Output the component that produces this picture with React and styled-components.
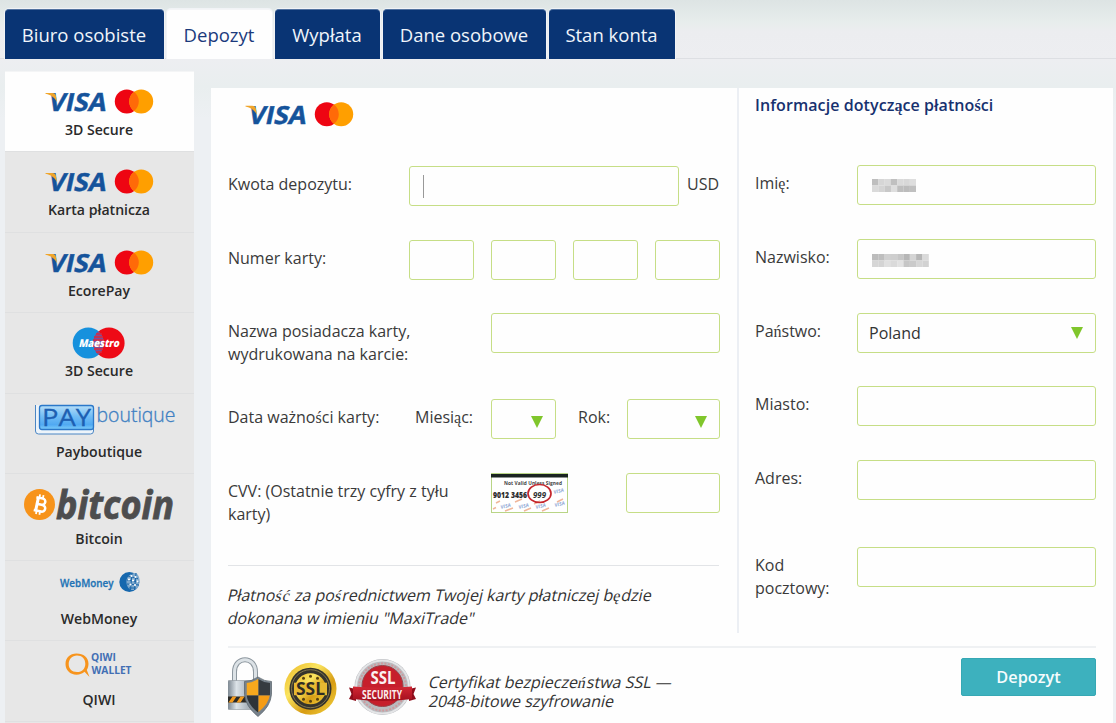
import React from 'react';
import styled, { createGlobalStyle } from 'styled-components';

const Global = createGlobalStyle`
  * { box-sizing: border-box; }
  html, body { margin: 0; padding: 0; overflow: hidden; }
  body {
    width: 1116px; height: 723px;
    font-family: "Open Sans", "Liberation Sans", sans-serif;
    font-size: 16px; color: #333;
    background: #eceff2;
  }
`;

const Page = styled.div`
  width: 1116px; height: 723px; overflow: hidden;
  display: flex; flex-direction: column;
`;

const TabBar = styled.nav`
  display: flex; height: 59px; flex: none;
  padding: 9px 0 0 5px; gap: 3px;
  border-bottom: 1px solid #dddfe3;
  background: linear-gradient(#dde4e4 0, #e7edec 22px, #ecedf0 32px, #edeef1 100%);
`;

const Tab = styled.button`
  width: ${(p) => p.$w}px; height: 50px; flex: none;
  margin: 0; padding: 1px 1px 0 0; border: 0;
  border-radius: 4px 4px 0 0;
  border-top: 1px solid ${(p) => (p.$active ? '#f4f5f7' : '#5273a0')};
  background: ${(p) => (p.$active ? '#fefefe' : '#093474')};
  color: ${(p) => (p.$active ? '#1b3a7c' : '#f0f5fb')};
  font: 18.5px/48px "Open Sans", sans-serif;
  text-align: center; white-space: nowrap;
  box-shadow: 0 0 0 1px #f1f3f6;
`;

const Body = styled.div`
  display: flex; flex: 1; gap: 17px; align-items: flex-start;
  padding-left: 5px;
  background: linear-gradient(#edeef1 0, #e9eeef 28px, #edf0f3 60px);
`;

const Sidebar = styled.aside`
  width: 189px; flex: none; padding-top: 12px;
  display: flex; flex-direction: column;
`;

const Method = styled.div`
  height: ${(p) => p.$h}px; flex: none;
  display: flex; flex-direction: column; align-items: center;
  background: ${(p) => (p.$active ? '#fefefe' : '#e7e7e7')};
  border-top: 1px solid ${(p) => (p.$active ? '#f4f5f6' : '#dfe0e1')};
`;

const MethodLogo = styled.svg`
  display: block; flex: none; width: 189px; height: ${(p) => p.$h}px;
  margin-top: -1px;
`;

const MethodName = styled.span`
  font-size: 14.1px; line-height: 20px; font-weight: 600; color: #2a2a2a;
  padding-right: 1px;
`;

const Panel = styled.main`
  width: 902px; height: 635px; margin-top: 29px; flex: none;
  background: #fefefe;
  display: flex; flex-direction: column;
`;

const Columns = styled.div`
  display: flex; height: 545px; flex: none;
`;

const CardColumn = styled.section`
  width: 528px; padding-left: 17px; flex: none;
  border-right: 2px solid #eceff4;
`;

const InfoColumn = styled.section`
  flex: 1; padding-left: 16px;
`;

const PanelLogo = styled.svg`
  display: block; width: 140px; height: 78px;
`;

const InfoTitle = styled.h2`
  margin: 0; height: 77px; padding-top: 6px;
  font-size: 16px; line-height: 23px; font-weight: 600; color: #17316f;
  letter-spacing: 0.08px;
  white-space: nowrap;
`;

const Row = styled.div`
  display: flex; align-items: flex-start; height: ${(p) => p.$h}px;
`;

const Label = styled.label`
  width: ${(p) => p.$w}px; flex: none; padding-top: 7px;
  line-height: 23px; white-space: pre-line; color: #3a3a3a;
`;

const Field = styled.div`
  width: ${(p) => p.$w}px; height: 40px; flex: none;
  margin-right: ${(p) => p.$mr || 0}px;
  border: 1px solid #c6de86; border-radius: 3px; background: #fefefe;
  display: flex; align-items: center;
  padding: 0 12px 0 ${(p) => p.$pl ?? 12}px;
  justify-content: ${(p) => (p.$select ? 'space-between' : 'flex-start')};
`;

const Caret = styled.span`
  width: 1px; height: 23px; background: #999; margin-left: 1px;
`;

const Arrow = styled.span`
  width: 0; height: 0; margin-left: auto; margin-top: ${(p) => p.$mt || 0}px;
  border-left: 6px solid transparent; border-right: 6px solid transparent;
  border-top: 12px solid #80c62c;
`;

const Divider = styled.hr`
  margin: 0; border: 0; height: 1px; width: 491px; background: #e2e4e7;
`;

const Note = styled.p`
  margin: 18px 0 0; line-height: 23px; color: #333; white-space: nowrap;
`;

/* A slanted roman line, wider than the true italic. */
const Slanted = styled.span`
  display: block; width: max-content; transform: skewX(-13deg);
`;

const Footer = styled.footer`
  margin: 13px 17px 0; border-top: 2px solid #eff1f3; flex: none;
  height: 77px; display: flex; align-items: flex-start;
`;

const Seals = styled.svg`
  display: block; width: 201px; height: 75px; flex: none;
`;

const Certificate = styled.p`
  margin: 25px 0 0; line-height: 19px; color: #333; white-space: nowrap;
`;

const Submit = styled.button`
  margin: 10px 0 0 auto; width: 135px; height: 38px; padding: 1px 0 0;
  border: 1px solid #36a8b4; border-radius: 2px; background: #3db1be; color: #f6fcfd;
  font: 600 16.3px/35px "Open Sans", sans-serif;
`;

const Serif = styled.span`
  font-family: "Liberation Serif", serif;
  letter-spacing: ${(p) => p.$ls || 0}px;
`;

/* Accented letters are set in the serif face. */
const Polish = ({ text, ls }) =>
  text.split(/([ąęśćń])/).map((part, i) =>
    i % 2 ? <Serif key={i} $ls={ls}>{part}</Serif> : part
  );

const sans = '"Open Sans", sans-serif';

const VisaMastercard = ({ x, y }) => (
  <g transform={`translate(${x} ${y})`}>
    <text transform="translate(2 18) skewX(-12)" fontFamily={sans} fontWeight="700" fontSize="25"
      textLength="57.500" lengthAdjust="spacingAndGlyphs" fill="#15539b" stroke="#15539b" strokeWidth=".5">VISA</text>
    <path d="M0 .3H6.5C9 .3 10 1.3 10.5 3.6L11.500 9.5C9.5 5.3 6 2.200 0 1Z" fill="#f0a52a" />
    <circle cx="81.3" cy="8.700" r="12" fill="#ee0512" />
    <circle cx="95.7" cy="8.700" r="12" fill="#ff9f00" />
    <path d="M88.5 -.9a12 12 0 0 1 0 19.200a12 12 0 0 1 0-19.200Z" fill="#ff6a08" />
  </g>
);

const Maestro = () => (
  <g>
    <circle cx="83.3" cy="31" r="15.6" fill="#1691dd" />
    <circle cx="104" cy="31" r="15.6" fill="#ee0a16" />
    <path d="M93.6 19.3a15.6 15.6 0 0 1 0 23.4a15.6 15.6 0 0 1 0-23.4Z" fill="#79509a" />
    <path d="M91 22h6M89 25h9M88 28h11M88 34h11M89 37h9M91 40h6" stroke="#d92a3e" strokeWidth="1.3" />
    <text transform="translate(73.500 34.800) skewX(-12)" fontFamily={sans} fontWeight="800" fontSize="11"
      textLength="40.500" lengthAdjust="spacingAndGlyphs" fill="#fff">Maestro</text>
  </g>
);

const Payboutique = () => (
  <g>
    <defs>
      <linearGradient id="pay" x1="0" y1="0" x2="0" y2="1">
        <stop offset="0" stopColor="#b5def8" /><stop offset=".45" stopColor="#72bdf5" />
        <stop offset=".8" stopColor="#50a9f2" /><stop offset="1" stopColor="#7fcffb" />
      </linearGradient>
    </defs>
    <path d="M30.5 12V38a3 3 0 0 0 3 3H85.500a3 3 0 0 0 3-3V14" fill="#edf4fa" stroke="#4b86c4" />
    <rect x="34.500" y="12.500" width="54" height="24" rx="2.500" fill="url(#pay)" stroke="#2b78c9" strokeWidth="1.300" />
    <text x="37" y="33" fontFamily={sans} fontSize="24" textLength="49"
      lengthAdjust="spacingAndGlyphs" fill="#1d5fb2" stroke="#1d5fb2" strokeWidth=".3">PAY</text>
    <text x="91.500" y="28.500" fontFamily={sans} fontWeight="300" fontSize="21" textLength="79"
      lengthAdjust="spacingAndGlyphs" fill="#4080c2" stroke="#4080c2" strokeWidth=".35">boutique</text>
  </g>
);

const Bitcoin = () => (
  <g>
    <circle cx="34.500" cy="31.500" r="15.500" fill="#f7931a" />
    <g transform="rotate(12 34.5 31.5)" stroke="#fff" fill="none">
      <path d="M30 25H36.500a3.100 3.100 0 0 1 0 6.300H31.500M32 31.300H37.500a3.400 3.400 0 0 1 0 6.800H30" strokeWidth="2.500" />
      <path d="M32 25V38" strokeWidth="3" />
      <path d="M33 21.500V25M36.500 21.500V25M33 38V41.500M36.500 38V41.500" strokeWidth="1.800" />
    </g>
    <text x="51" y="46" fontFamily={sans} fontStyle="italic" fontWeight="700" fontSize="38.500"
      textLength="118" lengthAdjust="spacingAndGlyphs" fill="#4d4d4e" stroke="#4d4d4e" strokeWidth=".8">bitcoin</text>
  </g>
);

const WebMoney = () => (
  <g>
    <text x="55" y="26.500" fontFamily={sans} fontWeight="600" fontSize="11.500" textLength="53.500"
      lengthAdjust="spacingAndGlyphs" fill="#2273b5" stroke="#2273b5" strokeWidth=".3">WebMoney</text>
    <circle cx="124.300" cy="22" r="10" fill="#1668ae" />
    <path d="M131 13C123 13 119.500 20 122.500 26.500C124.500 31 130 31 132.500 28C136 22 135 16 131 13Z" fill="#7fa9cd" />
    <g fill="none" stroke="#1b66a8" strokeWidth="1">
      <path d="M123 16L133 18.500M122 20L134 22M122 24L134 25M124 28L131 28" />
      <path d="M127 13L125.500 30M131 13L129.500 30" />
    </g>
    <g fill="#fff">
      <circle cx="126.500" cy="16" r="1.100" /><circle cx="130.500" cy="17" r="1.100" />
      <circle cx="124" cy="19.500" r="1.100" /><circle cx="128" cy="20.500" r="1.100" /><circle cx="132.500" cy="21.500" r="1.100" />
      <circle cx="125.500" cy="24.500" r="1.100" /><circle cx="130" cy="25" r="1.100" />
    </g>
  </g>
);

const Qiwi = () => (
  <g>
    <path d="M71.500 13.500C64.800 13.500 60.500 18 60.500 24S65 34.700 71.500 34.700C75 34.700 77.500 33.500 79.500 31.800L84.500 37L81.800 30C83 28 83.500 26 83.500 23.800C83.500 17.500 78.500 13.500 71.500 13.500ZM72 15.600C77 15.600 80.300 19 80.300 23.700S77.300 32 72 32S63.700 28.600 63.700 24S67 15.600 72 15.600Z" fill="#f7941d" fillRule="evenodd" />
    <text x="86" y="21" fontFamily={sans} fontWeight="700" fontSize="10.500" textLength="25"
      lengthAdjust="spacingAndGlyphs" fill="#426fb4">QIWI</text>
    <text x="86.500" y="33.500" fontFamily={sans} fontWeight="700" fontSize="10.500" textLength="40"
      lengthAdjust="spacingAndGlyphs" fill="#426fb4">WALLET</text>
  </g>
);

const SideVisa = () => <VisaMastercard x={40.500} y={21.700} />;

const methods = [
  { name: '3D Secure', Logo: SideVisa, h: 80, active: true },
  { name: 'Karta płatnicza', Logo: SideVisa, h: 81 },
  { name: 'EcorePay', Logo: SideVisa, h: 80 },
  { name: '3D Secure', Logo: Maestro, h: 81 },
  { name: 'Payboutique', Logo: Payboutique, h: 80 },
  { name: 'Bitcoin', Logo: Bitcoin, h: 87, logoH: 56 },
  { name: 'WebMoney', Logo: WebMoney, h: 80 },
  { name: 'QIWI', Logo: Qiwi, h: 81, logoH: 50 },
  { name: '', h: 6 },
];

const tabs = [
  { label: 'Biuro osobiste', w: 159 },
  { label: 'Depozyt', w: 105, active: true },
  { label: 'Wypłata', w: 105 },
  { label: 'Dane osobowe', w: 163 },
  { label: 'Stan konta', w: 126 },
];

const CardBackSvg = styled.svg`
  display: block; width: 77px; height: 40px; flex: none; margin-right: 58px;
`;

const CardBack = () => (
  <CardBackSvg viewBox="0 0 77 40">
    <rect x=".5" y=".5" width="76" height="39" fill="#fff" stroke="#b9d586" />
    <rect x="0" y="1" width="77" height="3.500" fill="#1a2420" />
    <text x="13" y="11.500" fontFamily={sans} fontWeight="700" fontSize="4.800" textLength="58" fill="#444">Not Valid Unless Signed</text>
    <text x="2" y="24.500" fontFamily={sans} fontWeight="800" fontSize="8.500" textLength="34" lengthAdjust="spacingAndGlyphs" fill="#2c2c2c">9012 3456</text>
    <text x="42" y="24.500" fontFamily={sans} fontWeight="700" fontStyle="italic" fontSize="8.500" textLength="13" lengthAdjust="spacingAndGlyphs" fill="#333">999</text>
    <g fontFamily={sans} fontSize="5" fontStyle="italic" fontWeight="700">
      {[[10, 36], [28, 36], [45, 36], [64, 34], [63, 21]].map(([x, y]) => (
        <text key={`${x}-${y}`} x={x} y={y} transform={`rotate(-14 ${x} ${y})`} fill="#93abd6">VISA</text>
      ))}
    </g>
    <path d="M2 36l3-1.500M14 38l8-3M24 29l7-3M33 38l7-3M43 31l6-3M51 38l7-3M66 29l6-3M5 30l4-2" stroke="#efb79b" strokeWidth="1.500" />
    <ellipse cx="48.500" cy="20.500" rx="11.500" ry="9" fill="none" stroke="#c5262c" strokeWidth="1.700" />
  </CardBackSvg>
);

const SecuritySeals = () => (
  <Seals viewBox="0 0 201 75">
    <defs>
      <linearGradient id="steel" x1="0" x2="1">
        <stop offset="0" stopColor="#7c8791" /><stop offset=".25" stopColor="#dce3e8" />
        <stop offset=".55" stopColor="#aeb7bf" /><stop offset="1" stopColor="#7d868e" />
      </linearGradient>
      <linearGradient id="gold" x1="0" y1="0" x2="1" y2="1">
        <stop offset="0" stopColor="#e9b422" /><stop offset=".35" stopColor="#fbe560" />
        <stop offset=".65" stopColor="#d79c14" /><stop offset="1" stopColor="#f5d640" />
      </linearGradient>
      <linearGradient id="ribbon" x1="0" y1="0" x2="0" y2="1">
        <stop offset="0" stopColor="#d32734" /><stop offset="1" stopColor="#a30f1d" />
      </linearGradient>
      <clipPath id="shieldClip"><path d="M19 33.500Q25 33 30.500 29.500Q36 33 42.500 33.500V45Q41 55 30.500 63Q20 55 19 45Z" /></clipPath>
    </defs>

    <g transform="translate(-.5 1.500)">
      <path d="M7 33V22.500C7 6 28 6 28 22.500V33" fill="none" stroke="#8d979f" strokeWidth="5" />
      <path d="M7 33V22.500C7 6 28 6 28 22.500V33" fill="none" stroke="#dce2e6" strokeWidth="3" />
      <rect x="0.500" y="31" width="34" height="29" rx="1" fill="url(#steel)" stroke="#8b949b" strokeWidth=".6" />
      <rect x="0.500" y="47" width="20" height="6" fill="#2b2a27" />
      <path d="M1 53l4-6h4l-4 6zM9 53l4-6h4l-4 6z" fill="#f29a1d" />
      <path d="M17 32Q24 32 30.500 27.500Q37 32 44 32V45Q43 57 30.500 67Q18 57 17 45Z" fill="#77828c" stroke="#555e66" strokeWidth=".7" />
      <g clipPath="url(#shieldClip)">
        <rect x="17" y="28" width="14" height="18" fill="#f7a81d" />
        <rect x="31" y="28" width="14" height="18" fill="#363b40" />
        <rect x="17" y="46" width="14" height="20" fill="#2e3338" />
        <rect x="31" y="46" width="14" height="20" fill="#f59c15" />
      </g>
    </g>

    <g transform="translate(0 -.8)">
      <circle cx="82.500" cy="41.500" r="26" fill="url(#gold)" />
      <circle cx="82.500" cy="41.500" r="21" fill="#36342c" />
      <circle cx="82.500" cy="41.500" r="19" fill="none" stroke="#968653" strokeWidth=".8" />
      <circle cx="82.500" cy="41.500" r="15.500" fill="url(#gold)" />
      <rect x="66" y="35.500" width="33" height="12.500" fill="#e7b932" />
      <text x="68" y="48" fontFamily={sans} fontWeight="700" fontSize="17.500" textLength="29"
        lengthAdjust="spacingAndGlyphs" fill="#302d25">SSL</text>
      <g fill="#59420f">
        <circle cx="75.500" cy="31" r="1.500" /><circle cx="82.500" cy="29" r="1.500" /><circle cx="89.500" cy="31" r="1.500" />
        <circle cx="75.500" cy="52" r="1.500" /><circle cx="82.500" cy="54" r="1.500" /><circle cx="89.500" cy="52" r="1.500" />
      </g>
    </g>

    <g>
      <circle cx="154.500" cy="39" r="28" fill="#b9bbbf" />
      <circle cx="154.500" cy="39" r="26.500" fill="none" stroke="#e4e5e7" strokeWidth="2" />
      <circle cx="154.500" cy="39" r="23.500" fill="none" stroke="#cf9a9e" strokeWidth="2" strokeDasharray="2 1.500" />
      <circle cx="154.500" cy="38" r="20.500" fill="#c61f2c" stroke="#99434a" />
      <path d="M121 39.500L128 41V53L121 51L123.500 46ZM188 39.500L181 41V53L188 51L185.500 46Z" fill="#8f0d1b" />
      <path d="M125 38.500Q154.500 41 184 38.500V51Q154.500 55 125 51Z" fill="url(#ribbon)" />
      <text x="142.500" y="36" fontFamily={sans} fontWeight="700" fontSize="17" textLength="25"
        lengthAdjust="spacingAndGlyphs" fill="#fbf1f1">SSL</text>
      <text x="134" y="51" fontFamily={sans} fontWeight="700" fontSize="12" textLength="40"
        lengthAdjust="spacingAndGlyphs" fill="#fbeeee">SECURITY</text>
    </g>
  </Seals>
);

const Mosaic = styled.svg`
  display: block; margin-left: 2px; margin-top: ${(p) => p.$mt || 0}px;
`;

const Redacted = ({ rows, w, mt }) => (
  <Mosaic width={w} height="13" $mt={mt}>
    {rows.map((row, r) =>
      row.map((v, c) => (
        <rect key={`${r}-${c}`} x={c * 6.300} y={r * 6.500} width="6.400" height="6.500" fill={`rgb(${v},${v},${v})`} />
      ))
    )}
  </Mosaic>
);

export default function App() {
  return (
    <>
      <Global />
      <Page>
        <TabBar>
          {tabs.map((t) => (
            <Tab key={t.label} $w={t.w} $active={t.active}>{t.label}</Tab>
          ))}
        </TabBar>
        <Body>
          <Sidebar>
            {methods.map(({ name, Logo, h, logoH = 49, active }, i) => (
              <Method key={i} $h={h} $active={active}>
                {Logo && <MethodLogo $h={logoH}><Logo /></MethodLogo>}
                {name && <MethodName>{name}</MethodName>}
              </Method>
            ))}
          </Sidebar>
          <Panel>
            <Columns>
              <CardColumn>
                <PanelLogo><VisaMastercard x={17.500} y={17.500} /></PanelLogo>
                <Row $h={74}>
                  <Label $w={181}>Kwota depozytu:</Label>
                  <Field $w={270} $mr={8}><Caret /></Field>
                  <Label>USD</Label>
                </Row>
                <Row $h={73}>
                  <Label $w={181}>Numer karty:</Label>
                  <Field $w={65} $mr={17} />
                  <Field $w={65} $mr={17} />
                  <Field $w={65} $mr={17} />
                  <Field $w={65} />
                </Row>
                <Row $h={86}>
                  <Label $w={263}>{'Nazwa posiadacza karty,\nwydrukowana na karcie:'}</Label>
                  <Field $w={229} />
                </Row>
                <Row $h={74}>
                  <Label $w={187}><Polish text="Data ważności karty:" /></Label>
                  <Label $w={76}><Polish text="Miesiąc:" /></Label>
                  <Field $w={65} $mr={22} $select><Arrow $mt={6} /></Field>
                  <Label $w={49}>Rok:</Label>
                  <Field $w={93} $select><Arrow $mt={6} /></Field>
                </Row>
                <Row $h={92}>
                  <Label $w={263}>{'CVV: (Ostatnie trzy cyfry z tyłu\nkarty)'}</Label>
                  <CardBack />
                  <Field $w={94} />
                </Row>
                <Divider />
                <Note>
                  <Slanted><Polish text="Płatność za pośrednictwem Twojej karty płatniczej będzie" ls={1} /></Slanted>
                  <Slanted>dokonana w imieniu "MaxiTrade"</Slanted>
                </Note>
              </CardColumn>
              <InfoColumn>
                <InfoTitle><Polish text="Informacje dotyczące płatności" /></InfoTitle>
                <Row $h={74}>
                  <Label $w={102}><Polish text="Imię:" /></Label>
                  <Field $w={239}>
                    <Redacted w={44} rows={[[190, 214, 218, 192, 218, 216, 222], [218, 212, 200, 222, 190, 188, 192]]} />
                  </Field>
                </Row>
                <Row $h={74}>
                  <Label $w={102}>Nazwisko:</Label>
                  <Field $w={239}>
                    <Redacted w={57} mt={3} rows={[[188, 190, 208, 206, 198, 182, 212, 182, 218], [214, 212, 224, 218, 226, 198, 202, 214, 210]]} />
                  </Field>
                </Row>
                <Row $h={73}>
                  <Label $w={102}><Polish text="Państwo:" /></Label>
                  <Field $w={239} $pl={11} $select>Poland<Arrow /></Field>
                </Row>
                <Row $h={74}>
                  <Label $w={102}>Miasto:</Label>
                  <Field $w={239} />
                </Row>
                <Row $h={87}>
                  <Label $w={102}>Adres:</Label>
                  <Field $w={239} />
                </Row>
                <Row $h={60}>
                  <Label $w={102}>{'Kod\npocztowy:'}</Label>
                  <Field $w={239} />
                </Row>
              </InfoColumn>
            </Columns>
            <Footer>
              <SecuritySeals />
              <Certificate>
                <Slanted><Polish text="Certyfikat bezpieczeństwa SSL —" ls={1} /></Slanted>
                <Slanted>2048-bitowe szyfrowanie</Slanted>
              </Certificate>
              <Submit>Depozyt</Submit>
            </Footer>
          </Panel>
        </Body>
      </Page>
    </>
  );
}
